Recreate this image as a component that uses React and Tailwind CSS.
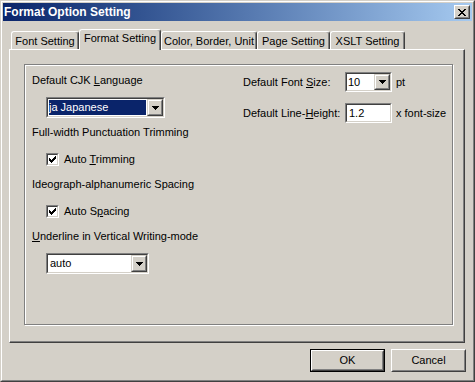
import React from "react";

function Sunken({ className = "", children, bg = "bg-white" }) {
  return (
    <div className={"border border-t-[#808080] border-l-[#808080] border-b-white border-r-white " + className}>
      <div className={"h-full border border-t-[#404040] border-l-[#404040] border-b-[#d4d0c8] border-r-[#d4d0c8] flex " + bg}>
        {children}
      </div>
    </div>
  );
}

function DropButton() {
  return (
    <div className="w-[16px] h-full border border-t-[#d4d0c8] border-l-[#d4d0c8] border-r-[#404040] border-b-[#404040] bg-[#d4d0c8] shrink-0">
      <div className="h-full border border-t-white border-l-white border-r-[#808080] border-b-[#808080] flex items-center justify-center">
        <svg width="7" height="4" viewBox="0 0 7 4" shapeRendering="crispEdges">
          <rect x="0" y="0" width="7" height="1" fill="#000" />
          <rect x="1" y="1" width="5" height="1" fill="#000" />
          <rect x="2" y="2" width="3" height="1" fill="#000" />
          <rect x="3" y="3" width="1" height="1" fill="#000" />
        </svg>
      </div>
    </div>
  );
}

function CheckBox({ label }) {
  return (
    <div className="flex items-center h-[13px] gap-[5px]">
      <Sunken className="w-[13px] h-[13px]">
        <div className="w-full h-full flex items-center justify-center">
          <svg width="7" height="7" viewBox="0 0 7 7" shapeRendering="crispEdges">
            <rect x="6" y="0" width="1" height="1" fill="#000" />
            <rect x="5" y="1" width="2" height="1" fill="#000" />
            <rect x="0" y="2" width="1" height="1" fill="#000" />
            <rect x="4" y="2" width="3" height="1" fill="#000" />
            <rect x="0" y="3" width="2" height="1" fill="#000" />
            <rect x="3" y="3" width="3" height="1" fill="#000" />
            <rect x="0" y="4" width="5" height="1" fill="#000" />
            <rect x="1" y="5" width="3" height="1" fill="#000" />
            <rect x="2" y="6" width="1" height="1" fill="#000" />
          </svg>
        </div>
      </Sunken>
      <span className="whitespace-nowrap">{label}</span>
    </div>
  );
}

function Tab({ label, selected, w }) {
  return (
    <div
      className={
        "relative flex justify-center border-l border-t border-r border-l-white border-t-white border-r-[#404040] rounded-tl-[3px] rounded-tr-[3px] bg-[#d4d0c8] shadow-[inset_-1px_0_0_#808080] whitespace-nowrap " +
        (selected ? "h-[21px] -mb-px z-10 pt-[2px]" : "h-[18px] pt-[3px]")
      }
      style={{ width: w }}
    >
      {label}
    </div>
  );
}

function Button({ label, isDefault }) {
  if (isDefault) {
    return (
      <div className="w-[75px] h-[23px] border border-black">
        <div className="h-full border border-t-white border-l-white border-r-[#404040] border-b-[#404040]">
          <div className="h-full border border-t-[#d4d0c8] border-l-[#d4d0c8] border-r-[#808080] border-b-[#808080] flex items-center justify-center">
            {label}
          </div>
        </div>
      </div>
    );
  }
  return (
    <div className="w-[75px] h-[23px] border border-t-white border-l-white border-r-[#404040] border-b-[#404040]">
      <div className="h-full border border-t-[#d4d0c8] border-l-[#d4d0c8] border-r-[#808080] border-b-[#808080] flex items-center justify-center">
        {label}
      </div>
    </div>
  );
}

export default function App() {
  return (
    <div className="w-[475px] h-[382px] bg-[#d4d0c8] border border-t-[#d4d0c8] border-l-[#d4d0c8] border-r-[#404040] border-b-[#404040] text-[11px] leading-[13px] text-black font-['Liberation_Sans',Arial,sans-serif]">
      <div className="h-full border border-t-white border-l-white border-r-[#808080] border-b-[#808080] p-px flex flex-col">
        {/* Title bar */}
        <div className="h-[18px] shrink-0 flex items-center bg-linear-to-r from-[#0a246a] to-[#a6caf0] pl-[1px] pr-[2px]">
          <span className="text-white font-bold text-[12px] whitespace-nowrap">Format Option Setting</span>
          <div className="ml-auto w-[16px] h-[14px] border border-t-white border-l-white border-r-[#404040] border-b-[#404040] bg-[#d4d0c8]">
            <div className="h-full border border-t-[#d4d0c8] border-l-[#d4d0c8] border-r-[#808080] border-b-[#808080] flex items-center justify-center">
              <svg width="8" height="7" viewBox="0 0 8 7" shapeRendering="crispEdges">
                <rect x="0" y="0" width="2" height="1" fill="#000" />
                <rect x="6" y="0" width="2" height="1" fill="#000" />
                <rect x="1" y="1" width="2" height="1" fill="#000" />
                <rect x="5" y="1" width="2" height="1" fill="#000" />
                <rect x="2" y="2" width="4" height="1" fill="#000" />
                <rect x="3" y="3" width="2" height="1" fill="#000" />
                <rect x="2" y="4" width="4" height="1" fill="#000" />
                <rect x="1" y="5" width="2" height="1" fill="#000" />
                <rect x="5" y="5" width="2" height="1" fill="#000" />
                <rect x="0" y="6" width="2" height="1" fill="#000" />
                <rect x="6" y="6" width="2" height="1" fill="#000" />
              </svg>
            </div>
          </div>
        </div>

        {/* Body */}
        <div className="flex-1 flex flex-col pt-[8px] pl-[6px]">
          {/* Tabs */}
          <div className="flex items-end h-[20px] pl-[2px]">
            <Tab label="Font Setting" w={68} />
            <Tab label="Format Setting" w={82} selected />
            <Tab label="Color, Border, Unit" w={96} />
            <Tab label="Page Setting" w={73} />
            <Tab label="XSLT Setting" w={75} />
          </div>

          {/* Panel */}
          <div className="w-[456px] h-[294px] border border-l-white border-t-white border-r-[#404040] border-b-[#404040] shadow-[inset_-1px_-1px_0_#808080] pl-[14px] pt-[14px]">
            <div className="w-[429px] h-[261px] border border-[#808080] shadow-[1px_1px_0_#fff,inset_1px_1px_0_#fff] flex pl-[7px]">
              {/* Left column */}
              <div className="w-[211px] flex flex-col">
                <div className="mt-[9px] whitespace-nowrap">
                  Default CJK <u>L</u>anguage
                </div>
                <Sunken className="mt-[10px] ml-[14px] w-[119px] h-[21px]">
                  <div className="flex-1 m-px bg-[#0a246a] text-white flex items-center whitespace-nowrap">
                    ja Japanese
                  </div>
                  <DropButton />
                </Sunken>
                <div className="mt-[8px] whitespace-nowrap">Full-width Punctuation Trimming</div>
                <div className="mt-[14px] ml-[14px]">
                  <CheckBox label={<>Auto <u>T</u>rimming</>} />
                </div>
                <div className="mt-[12px] whitespace-nowrap">Ideograph-alphanumeric Spacing</div>
                <div className="mt-[14px] ml-[14px]">
                  <CheckBox label={<>Auto S<u>p</u>acing</>} />
                </div>
                <div className="mt-[12px] whitespace-nowrap">
                  <u>U</u>nderline in Vertical Writing-mode
                </div>
                <Sunken className="mt-[10px] ml-[14px] w-[103px] h-[21px]">
                  <div className="flex-1 pl-[2px] flex items-center">auto</div>
                  <DropButton />
                </Sunken>
              </div>

              {/* Right column */}
              <div className="flex flex-col">
                <div className="mt-[7px] h-[20px] flex items-center">
                  <div className="w-[102px] whitespace-nowrap">
                    Default Font <u>S</u>ize:
                  </div>
                  <Sunken className="w-[47px] h-[20px]">
                    <div className="flex-1 pl-[1px] flex items-center">10</div>
                    <DropButton />
                  </Sunken>
                  <span className="ml-[4px]">pt</span>
                </div>
                <div className="mt-[11px] h-[20px] flex items-center">
                  <div className="w-[102px] whitespace-nowrap">
                    Default Line-<u>H</u>eight:
                  </div>
                  <Sunken className="w-[47px] h-[20px]">
                    <div className="flex-1 pl-[2px] flex items-center">1.2</div>
                  </Sunken>
                  <span className="ml-[4px] whitespace-nowrap">x font-size</span>
                </div>
              </div>
            </div>
          </div>

          {/* Buttons */}
          <div className="flex justify-end gap-[6px] mt-[6px] pr-[6px]">
            <Button label="OK" isDefault />
            <Button label="Cancel" />
          </div>
        </div>
      </div>
    </div>
  );
}
